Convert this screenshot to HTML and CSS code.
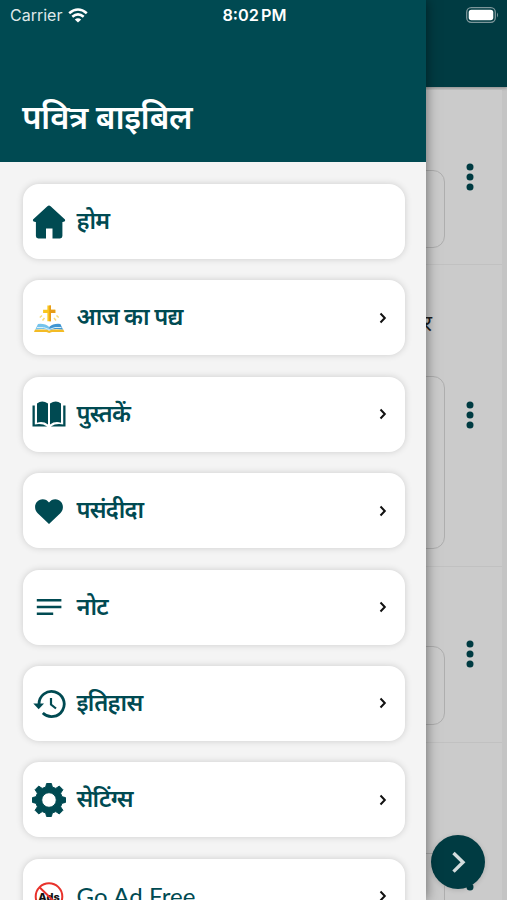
FILE: index.html
```html
<!DOCTYPE html>
<html lang="hi">
<head>
    <meta charset="UTF-8">
    <meta name="viewport" content="width=device-width, initial-scale=1.0">
    <title>पवित्र बाइबिल</title>
    <link rel="stylesheet" href="styles.css">
</head>
<body>
    <div class="page">
        <div class="page-header"></div>
        <div class="verses">
            <div class="verse">
                <div class="verse-box"></div>
                <svg class="dots" viewBox="0 0 8 28"><circle cx="4" cy="4" r="3.5"/><circle cx="4" cy="14" r="3.5"/><circle cx="4" cy="24" r="3.5"/></svg>
            </div>
            <div class="verse verse-long">
                <div class="verse-main">
                    <div class="verse-text">र</div>
                    <div class="verse-box"></div>
                </div>
                <svg class="dots" viewBox="0 0 8 28"><circle cx="4" cy="4" r="3.5"/><circle cx="4" cy="14" r="3.5"/><circle cx="4" cy="24" r="3.5"/></svg>
            </div>
            <div class="verse">
                <div class="verse-box"></div>
                <svg class="dots" viewBox="0 0 8 28"><circle cx="4" cy="4" r="3.5"/><circle cx="4" cy="14" r="3.5"/><circle cx="4" cy="24" r="3.5"/></svg>
            </div>
            <div class="verse verse-last">
                <div class="verse-box"></div>
                <svg class="dots" viewBox="0 0 8 28"><circle cx="4" cy="4" r="3.5"/><circle cx="4" cy="14" r="3.5"/><circle cx="4" cy="24" r="3.5"/></svg>
            </div>
        </div>
        <div class="next">
            <svg viewBox="0 0 54 54"><path d="M22.500 18l9.500 9.300-9.500 9.300"/></svg>
        </div>
    </div>

    <nav class="drawer">
        <header class="drawer-header">
            <h1>पवित्र बाइबिल</h1>
        </header>
        <div class="menu">
            <a class="menu-item">
                <svg class="icon" viewBox="0 0 34 34"><path d="M15.400 1.200q1.600-1.300 3.200 0L33 14.600q.8 2.400-2.600 2.300V31q0 2.400-2.400 2.400h-7.500V23.600h-6.500v9.800H6.300q-2.400 0-2.400-2.400V16.900Q.2 17 1 14.600z"/></svg>
                <span>होम</span>
            </a>
            <a class="menu-item">
                <svg class="icon" viewBox="0 0 34 34">
                    <path fill="#f9c51d" d="M15.400 4.500h3.600v4.200h4.300v3.400H19v8.200h-3.600v-8.200h-4.300V8.700h4.300z"/>
                    <path fill="#e79c18" d="M17.300 4.500H19v4.200h4.300v3.400H19v8.200h-1.700z"/>
                    <path fill="none" stroke="#f8dc79" stroke-width="1.500" d="M10 14.500l-2.200 2M12.500 17l-2 2.500M24.500 14.500l2.200 2M22 17l2 2.500"/>
                    <path fill="#f3bb25" d="M3 28.500h11.500l2.700 1.300 2.700-1.300h11.500l1 2.600H20l-2.800 1-2.800-1H2z"/>
                    <path fill="#75c3ec" d="M6 23q7-.8 11.200 3v3.300Q12 27 3.300 28.500z"/>
                    <path fill="#4196d2" d="M28.400 23q-7-.8-11.200 3v3.300Q22.500 27 31 28.500z"/>
                    <path fill="none" stroke="#d7effa" d="M5 26.500q7-1 12.200 2Q22.500 25.500 29.500 26.500"/>
                </svg>
                <span>आज का पद्य</span>
                <svg class="arrow" viewBox="0 0 8 12"><path d="M1.500 1.500l4.300 4.500-4.300 4.500"/></svg>
            </a>
            <a class="menu-item">
                <svg class="icon" viewBox="0 0 34 34">
                    <path d="M5 6.500Q10 2.500 16 6.500v21Q11 23.700 5 25.700zM18 6.500q6-4 11 0v19.200q-6-2-11 1.800z"/>
                    <path d="M.5 8.500h2.300v19q7-1.600 12.300 2H.5zM33.500 8.500h-2.300v19q-7-1.600-12.300 2h14.600z"/>
                </svg>
                <span>पुस्तकें</span>
                <svg class="arrow" viewBox="0 0 8 12"><path d="M1.500 1.500l4.300 4.500-4.300 4.500"/></svg>
            </a>
            <a class="menu-item">
                <svg class="icon" viewBox="0 0 34 34"><path d="M17 30L5.700 19.300C.5 14 3.500 5.200 10.700 5.200c2.600 0 4.800 1.200 6.300 3.300 1.500-2.100 3.700-3.300 6.300-3.300 7.200 0 10.200 8.800 5 14.100z"/></svg>
                <span>पसंदीदा</span>
                <svg class="arrow" viewBox="0 0 8 12"><path d="M1.500 1.500l4.300 4.500-4.300 4.500"/></svg>
            </a>
            <a class="menu-item">
                <svg class="icon" viewBox="0 0 34 34"><path d="M4.800 8.900h24.600v2.600H4.800zM4.800 15.700h24.600v2.600H4.800zM4.800 22.500h16.400v2.600H4.800z"/></svg>
                <span>नोट</span>
                <svg class="arrow" viewBox="0 0 8 12"><path d="M1.500 1.500l4.300 4.500-4.300 4.500"/></svg>
            </a>
            <a class="menu-item">
                <svg class="icon" viewBox="0 0 34 34">
                    <path class="line" d="M7 18a12.600 12.600 0 1 1 3.800 9"/>
                    <path class="line thin" d="M19 12v6.500l5 4"/>
                    <path d="M1.300 17.500H12L6.700 23.300z"/>
                </svg>
                <span>इतिहास</span>
                <svg class="arrow" viewBox="0 0 8 12"><path d="M1.500 1.500l4.300 4.500-4.300 4.500"/></svg>
            </a>
            <a class="menu-item">
                <svg class="icon" viewBox="0 0 34 34">
                    <path fill-rule="evenodd" stroke="#004a52" stroke-linejoin="round" d="M14.600.500h4.800l.9 3.500 3.500 1.400 3.500-2.300 3.600 3.600-2.300 3.500 1.400 3.500 3.500.9v4.800l-3.500.9-1.400 3.500 2.300 3.500-3.600 3.600-3.500-2.300-3.500 1.400-.9 3.500h-4.800l-.9-3.500-3.500-1.400-3.500 2.300-3.600-3.600 2.300-3.500L4 20.300l-3.500-.9v-4.800l3.500-.9 1.400-3.500-2.300-3.500 3.600-3.600 3.500 2.300L13.700 4zM17 9.700a7.300 7.300 0 1 0 0 14.600 7.300 7.300 0 0 0 0-14.600z"/>
                </svg>
                <span>सेटिंग्स</span>
                <svg class="arrow" viewBox="0 0 8 12"><path d="M1.500 1.500l4.300 4.500-4.300 4.500"/></svg>
            </a>
            <a class="menu-item">
                <svg class="icon" viewBox="0 0 34 34">
                    <circle class="ban" cx="17" cy="17.500" r="13.300"/>
                    <text class="ads" x="17" y="21.500" text-anchor="middle">Ads</text>
                    <path class="ban" d="M7.500 8.200l19 18.600"/>
                </svg>
                <span class="latin">Go Ad Free</span>
                <svg class="arrow" viewBox="0 0 8 12"><path d="M1.500 1.500l4.300 4.500-4.300 4.500"/></svg>
            </a>
        </div>
    </nav>

    <div class="status-bar">
        <div class="carrier">
            Carrier
            <svg class="wifi" viewBox="0 0 20 15"><path d="M1.200 5.300q8.800-7.600 17.600 0M4.300 8.700q5.700-4.800 11.400 0"/><path class="wifi-dot" d="M6.800 11.400q3.200-2.500 6.400 0L10 14.600z"/></svg>
        </div>
        <div class="time">8:02 PM</div>
        <svg class="battery" viewBox="0 0 33 16"><rect class="case" x=".7" y=".7" width="28.600" height="14.600" rx="4.500"/><rect x="2.700" y="2.700" width="24.600" height="10.600" rx="2.700"/><path class="tip" d="M31 5.500q2 2.500 0 5z"/></svg>
    </div>
</body>
</html>
```
FILE: styles.css
```css
* {
    box-sizing: border-box;
}
body {
    margin: 0;
    height: 900px;
    position: relative;
    overflow: hidden;
    font-family: 'Noto Sans', 'Noto Sans Devanagari', sans-serif;
    background-color: #c4c4c4;
}
svg {
    display: block;
}

/* page behind the drawer */
.page {
    height: 900px;
    overflow: hidden;
}
.page-header {
    height: 87px;
    background-color: #003b42;
    box-shadow: 0 1px 3px rgba(0, 0, 0, 0.3);
}
.verses {
    margin: 3px 5px 0 0;
    background-color: #cbcbcb;
}
.verse {
    height: 176px;
    padding: 0 28px 17px 0;
    display: flex;
    align-items: flex-end;
    gap: 21px;
    border-bottom: 1px solid #c1c1c1;
}
.verse:first-child {
    height: 175px;
}
.verse-long {
    height: 302px;
}
.verse-last {
    height: 270px;
}
.verse-box {
    flex: 1;
    height: 79px;
    border: 1px solid #aeaeae;
    border-radius: 12px;
}
.verse:first-child .verse-box {
    height: 78px;
    margin-bottom: -1px;
}
.verse-main {
    flex: 1;
}
.verse-text {
    padding-right: 13px;
    margin-bottom: 39px;
    font-size: 22px;
    line-height: 30px;
    text-align: right;
    color: #1c1c1c;
}
.verse-long .verse-box {
    height: 173px;
}
.verse-last .verse-box {
    height: 142px;
}
.dots {
    width: 8px;
    height: 28px;
    align-self: center;
    margin-top: 16px;
    fill: #003b42;
}
.next {
    position: absolute;
    left: 431px;
    top: 835px;
    width: 54px;
    height: 54px;
    border-radius: 50%;
    background-color: #003b42;
    box-shadow: 0 1px 5px rgba(0, 0, 0, 0.15);
}
.next path {
    fill: none;
    stroke: #d3dcdd;
    stroke-width: 3.4;
}

/* drawer */
.drawer {
    position: absolute;
    left: 0;
    top: 0;
    width: 426px;
    height: 900px;
    overflow: hidden;
    background-color: #f4f4f4;
    box-shadow: 0 0 12px rgba(0, 0, 0, 0.5);
}
.drawer-header {
    height: 162px;
    padding: 92px 22px 0;
    background-color: #004a52;
}
h1 {
    margin: 0;
    font-size: 33px;
    line-height: 50px;
    font-weight: 600;
    letter-spacing: -0.6px;
    color: #fff;
}
.menu {
    padding: 22px 21.5px 0 22.5px;
    display: flex;
    flex-direction: column;
    gap: 21.4px;
}
.menu-item {
    height: 75px;
    padding: 0 17.5px 0 9.5px;
    display: flex;
    align-items: center;
    gap: 10.5px;
    flex-shrink: 0;
    border-radius: 16px;
    background-color: #fff;
    box-shadow: 0 0 7px rgba(0, 0, 0, 0.16);
    font-size: 23.5px;
    line-height: 32px;
    font-weight: 600;
    letter-spacing: -0.8px;
    color: #004a52;
}
.menu-item span {
    padding-bottom: 3px;
}
.icon {
    width: 34px;
    height: 34px;
    fill: #004a52;
}
.icon .line {
    fill: none;
    stroke: #004a52;
    stroke-width: 2.8;
}
.icon .thin {
    stroke-width: 2.2;
}
.icon .ban {
    fill: none;
    stroke: #e8322b;
    stroke-width: 2;
}
.ads {
    font: 800 11px 'Inter', sans-serif;
    letter-spacing: 0;
    fill: #111;
}
.menu-item .latin {
    padding-bottom: 1px;
    font-family: 'Lato', sans-serif;
    font-size: 24px;
    font-weight: 400;
    letter-spacing: 0.1px;
}
.arrow {
    width: 8px;
    height: 12px;
    margin-left: auto;
    fill: none;
    stroke: #111;
    stroke-width: 2;
}

/* status bar */
.status-bar {
    position: absolute;
    left: 0;
    top: 0;
    width: 100%;
    height: 30px;
    padding: 0 8px 0 10px;
    display: grid;
    grid-template-columns: 1fr auto 1fr;
    align-items: center;
    font-family: 'Inter', sans-serif;
    font-size: 16px;
    color: #fff;
}
.carrier {
    display: flex;
    align-items: center;
    gap: 6px;
    color: #dfe8e9;
}
.wifi {
    width: 20px;
    height: 15px;
    fill: none;
    stroke: #fff;
    stroke-width: 2.6;
}
.wifi-dot {
    fill: #fff;
    stroke: none;
}
.time {
    font-size: 16.3px;
    font-weight: 600;
    word-spacing: -2px;
}
.battery {
    width: 33px;
    height: 16px;
    margin-top: -1px;
    justify-self: end;
    fill: #fff;
}
.battery .case {
    fill: none;
    stroke: #7d979b;
    stroke-width: 1.3;
}
.battery .tip {
    fill: #7d979b;
}
```
